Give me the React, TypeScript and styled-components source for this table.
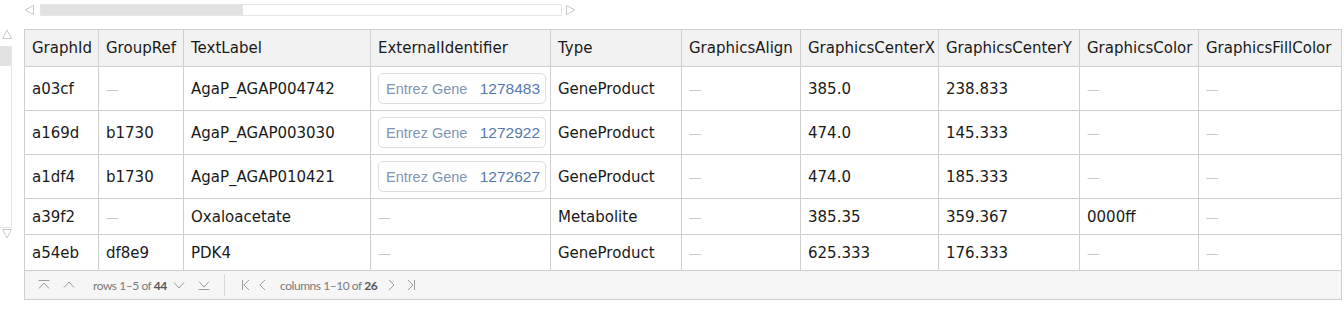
import React from 'react';
import styled, { createGlobalStyle } from 'styled-components';

const GlobalStyle = createGlobalStyle`
  html, body {
    margin: 0;
    padding: 0;
    background: #ffffff;
  }
  body {
    font-family: 'DejaVu Sans', Lato, sans-serif;
  }
`;

type Ext = { source: string; id: string } | null;

interface Row {
  graphId: string;
  groupRef: string | null;
  textLabel: string;
  ext: Ext;
  type: string;
  align: string | null;
  centerX: string;
  centerY: string;
  color: string | null;
  fillColor: string | null;
}

const columns = [
  { name: 'GraphId', width: 74 },
  { name: 'GroupRef', width: 85 },
  { name: 'TextLabel', width: 187 },
  { name: 'ExternalIdentifier', width: 180 },
  { name: 'Type', width: 131 },
  { name: 'GraphicsAlign', width: 119 },
  { name: 'GraphicsCenterX', width: 138 },
  { name: 'GraphicsCenterY', width: 141 },
  { name: 'GraphicsColor', width: 119 },
  { name: 'GraphicsFillColor', width: 143 },
];

const rows: Row[] = [
  {
    graphId: 'a03cf',
    groupRef: null,
    textLabel: 'AgaP_AGAP004742',
    ext: { source: 'Entrez Gene', id: '1278483' },
    type: 'GeneProduct',
    align: null,
    centerX: '385.0',
    centerY: '238.833',
    color: null,
    fillColor: null,
  },
  {
    graphId: 'a169d',
    groupRef: 'b1730',
    textLabel: 'AgaP_AGAP003030',
    ext: { source: 'Entrez Gene', id: '1272922' },
    type: 'GeneProduct',
    align: null,
    centerX: '474.0',
    centerY: '145.333',
    color: null,
    fillColor: null,
  },
  {
    graphId: 'a1df4',
    groupRef: 'b1730',
    textLabel: 'AgaP_AGAP010421',
    ext: { source: 'Entrez Gene', id: '1272627' },
    type: 'GeneProduct',
    align: null,
    centerX: '474.0',
    centerY: '185.333',
    color: null,
    fillColor: null,
  },
  {
    graphId: 'a39f2',
    groupRef: null,
    textLabel: 'Oxaloacetate',
    ext: null,
    type: 'Metabolite',
    align: null,
    centerX: '385.35',
    centerY: '359.367',
    color: '0000ff',
    fillColor: null,
  },
  {
    graphId: 'a54eb',
    groupRef: 'df8e9',
    textLabel: 'PDK4',
    ext: null,
    type: 'GeneProduct',
    align: null,
    centerX: '625.333',
    centerY: '176.333',
    color: null,
    fillColor: null,
  },
];

const gridTemplate = columns.map(c => `${c.width}px`).join(' ');

function Triangle({ dir }: { dir: 'up' | 'down' | 'left' | 'right' }) {
  const pts = {
    up: '5,1 9.5,9.5 0.5,9.5',
    down: '0.5,0.5 9.5,0.5 5,9',
    left: '9.5,0.5 9.5,9.5 1,5',
    right: '0.5,0.5 0.5,9.5 9,5',
  }[dir];
  return (
    <svg width="10" height="10" viewBox="0 0 10 10">
      <polygon points={pts} fill="none" stroke="#c8c8c8" strokeWidth="1" />
    </svg>
  );
}

type NavKind = 'first' | 'prev' | 'next' | 'last' | 'home' | 'left' | 'right' | 'end';

// footer pager glyphs: line + chevron pairs
const navPaths: Record<NavKind, string> = {
  first: 'M0.5 1.5 H11.5 M1 9.5 L6 4 L11 9.5',
  prev: 'M1 8.5 L6 3 L11 8.5',
  next: 'M1 3.5 L6 9 L11 3.5',
  last: 'M1 2.5 L6 8 L11 2.5 M0.5 10.5 H11.5',
  home: 'M1.5 1 V11 M8 1 L3 6 L8 11',
  left: 'M8 1 L3 6 L8 11',
  right: 'M4 1 L9 6 L4 11',
  end: 'M4 1 L9 6 L4 11 M10.5 1 V11',
};

function NavIcon({ kind, after }: { kind: NavKind; after: number }) {
  return (
    <NavSvg $after={after} width="12" height="12" viewBox="0 0 12 12">
      <path d={navPaths[kind]} fill="none" stroke="#9c9c9c" strokeWidth="1" />
    </NavSvg>
  );
}

function Missing() {
  return <Dash>—</Dash>;
}

function Value({ v }: { v: string | null }) {
  return v === null ? <Missing /> : <>{v}</>;
}

export default function App() {
  return (
    <Page>
      <GlobalStyle />
      <HScroll>
        <Triangle dir="left" />
        <HTrack>
          <HThumb />
        </HTrack>
        <Triangle dir="right" />
      </HScroll>
      <Body>
        <VScroll>
          <ArrowSlot>
            <Triangle dir="up" />
          </ArrowSlot>
          <VTrack>
            <VThumb />
          </VTrack>
          <ArrowSlot>
            <Triangle dir="down" />
          </ArrowSlot>
        </VScroll>
        <Frame>
          <Grid>
            {columns.map(c => (
              <HeadCell key={c.name}>{c.name}</HeadCell>
            ))}
            {rows.map(r => {
              const tall = r.ext !== null;
              return (
                <React.Fragment key={r.graphId}>
                  <Cell $tall={tall}>{r.graphId}</Cell>
                  <Cell $tall={tall}>
                    <Value v={r.groupRef} />
                  </Cell>
                  <Cell $tall={tall}>{r.textLabel}</Cell>
                  <Cell $tall={tall}>
                    {r.ext ? (
                      <Chip>
                        <ChipSource>{r.ext.source}</ChipSource>
                        <ChipId>{r.ext.id}</ChipId>
                      </Chip>
                    ) : (
                      <Missing />
                    )}
                  </Cell>
                  <Cell $tall={tall}>{r.type}</Cell>
                  <Cell $tall={tall}>
                    <Value v={r.align} />
                  </Cell>
                  <Cell $tall={tall}>{r.centerX}</Cell>
                  <Cell $tall={tall}>{r.centerY}</Cell>
                  <Cell $tall={tall}>
                    <Value v={r.color} />
                  </Cell>
                  <Cell $tall={tall}>
                    <Value v={r.fillColor} />
                  </Cell>
                </React.Fragment>
              );
            })}
          </Grid>
          <Footer>
            <NavIcon kind="first" after={13} />
            <NavIcon kind="prev" after={18} />
            <NavText $width={70} $after={10}>
              rows 1–5 of <b>44</b>
            </NavText>
            <NavIcon kind="next" after={13} />
            <NavIcon kind="last" after={14} />
            <NavDivider />
            <NavIcon kind="home" after={4} />
            <NavIcon kind="left" after={11} />
            <NavText $width={98} $after={7}>
              columns 1–10 of <b>26</b>
            </NavText>
            <NavIcon kind="right" after={7} />
            <NavIcon kind="end" after={0} />
          </Footer>
        </Frame>
      </Body>
    </Page>
  );
}

const Page = styled.div`
  padding-top: 4px;
  width: 1344px;
  height: 324px;
  overflow: hidden;
  box-sizing: border-box;
`;

const HScroll = styled.div`
  display: flex;
  align-items: center;
  gap: 6px;
  margin-left: 24px;
  height: 12px;

  svg {
    flex: none;
  }
  > svg:last-child {
    margin-left: -2px;
  }
`;

const HTrack = styled.div`
  width: 522px;
  height: 12px;
  box-sizing: border-box;
  border: 1px solid #e6e6e6;
  background: #ffffff;
  display: flex;
`;

const HThumb = styled.div`
  width: 202px;
  background: #e2e2e2;
`;

const Body = styled.div`
  display: flex;
  gap: 12px;
  margin-top: 13px;
`;

const VScroll = styled.div`
  width: 12px;
  display: flex;
  flex-direction: column;
`;

const ArrowSlot = styled.div`
  height: 10px;
  display: flex;
  justify-content: flex-end;
  margin: 0 0 7px;

  &:last-child {
    margin: 1px 0 0;
  }
`;

const VTrack = styled.div`
  height: 182px;
  box-sizing: border-box;
  border: 1px solid #e6e6e6;
  border-left: none;
  display: flex;
  flex-direction: column;
`;

const VThumb = styled.div`
  height: 19px;
  background: #e2e2e2;
`;

const Frame = styled.div`
  width: 1318px;
  border: 1px solid #cfcfcf;
  border-right: none;
  box-sizing: border-box;
`;

const Grid = styled.div`
  display: grid;
  grid-template-columns: ${gridTemplate};
`;

const CellBase = styled.div`
  box-sizing: border-box;
  border-right: 1px solid #cfcfcf;
  border-bottom: 1px solid #cfcfcf;
  display: flex;
  align-items: center;
  padding-left: 7px;
  font-size: 15px;
  color: #1a1a1a;
  white-space: nowrap;
  overflow: hidden;
`;

const HeadCell = styled(CellBase)`
  height: 37px;
  background: #f2f2f2;
`;

const Cell = styled(CellBase)<{ $tall?: boolean }>`
  height: ${p => (p.$tall ? 44 : 36)}px;
`;

const Dash = styled.span`
  color: #c8c8c8;
  font-size: 12.5px;
  padding-top: 2px;
`;

const Chip = styled.div`
  display: flex;
  align-items: center;
  justify-content: space-between;
  width: 168px;
  height: 31px;
  box-sizing: border-box;
  padding: 0 5px 0 7px;
  border: 1px solid #dedede;
  border-radius: 5px;
  font-family: 'Liberation Sans', Arial, sans-serif;
  font-size: 14.5px;
`;

const ChipSource = styled.span`
  color: #8195b4;
`;

const ChipId = styled.span`
  color: #5679b0;
  font-size: 15.5px;
`;

const Footer = styled.div`
  height: 28px;
  background: #f6f6f6;
  border-right: 1px solid #cfcfcf;
  display: flex;
  align-items: center;
  padding-left: 13px;
`;

const NavSvg = styled.svg<{ $after: number }>`
  flex: none;
  margin-right: ${p => p.$after}px;
`;

const NavDivider = styled.div`
  width: 1px;
  align-self: stretch;
  margin: 3px 16px 3px 0;
  background: #d8d8d8;
`;

const NavText = styled.span<{ $width: number; $after: number }>`
  width: ${p => p.$width}px;
  margin-right: ${p => p.$after}px;
  font-family: Lato, sans-serif;
  font-size: 12px;
  letter-spacing: -0.45px;
  color: #7a7a7a;
  white-space: nowrap;

  b {
    color: #555555;
    font-weight: 700;
  }
`;
